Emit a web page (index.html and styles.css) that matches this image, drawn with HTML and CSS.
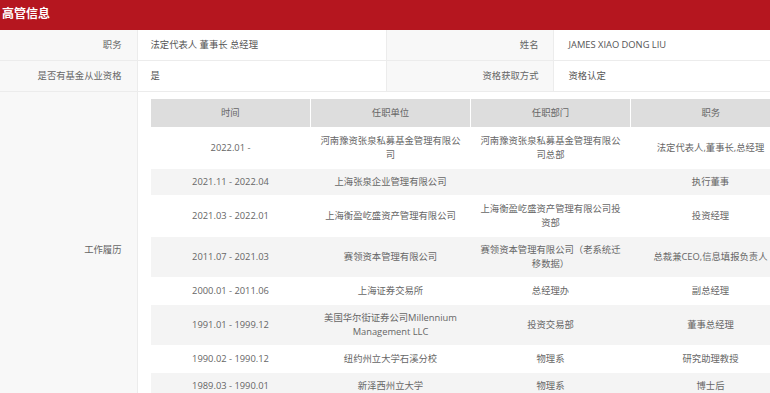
FILE: index.html
```html
<!DOCTYPE html>
<html lang="zh-CN">
<head>
<meta charset="utf-8">
<title>高管信息</title>
<link rel="stylesheet" href="styles.css">
</head>
<body>
<div class="panel">
  <div class="panel-title">高管信息</div>
  <table class="info">
    <colgroup>
      <col class="c-label1"><col class="c-value1"><col class="c-label2"><col class="c-value2">
    </colgroup>
    <tr>
      <th class="label">职务</th>
      <td class="value">法定代表人 董事长 总经理</td>
      <th class="label label2">姓名</th>
      <td class="value value2">JAMES XIAO DONG LIU</td>
    </tr>
    <tr>
      <th class="label">是否有基金从业资格</th>
      <td class="value">是</td>
      <th class="label label2">资格获取方式</th>
      <td class="value value2">资格认定</td>
    </tr>
    <tr>
      <th class="label">工作履历</th>
      <td class="value history-cell" colspan="3">
        <table class="history">
          <thead>
            <tr><th>时间</th><th>任职单位</th><th>任职部门</th><th>职务</th></tr>
          </thead>
          <tbody>
            <tr><td>2022.01 -</td><td>河南豫资张泉私募基金管理有限公司</td><td>河南豫资张泉私募基金管理有限公司总部</td><td>法定代表人,董事长,总经理</td></tr>
            <tr><td>2021.11 - 2022.04</td><td>上海张泉企业管理有限公司</td><td></td><td>执行董事</td></tr>
            <tr><td>2021.03 - 2022.01</td><td>上海衡盈屹盛资产管理有限公司</td><td>上海衡盈屹盛资产管理有限公司投资部</td><td>投资经理</td></tr>
            <tr><td>2011.07 - 2021.03</td><td>赛领资本管理有限公司</td><td>赛领资本管理有限公司（老系统迁移数据）</td><td>总裁兼CEO,信息填报负责人</td></tr>
            <tr><td>2000.01 - 2011.06</td><td>上海证券交易所</td><td>总经理办</td><td>副总经理</td></tr>
            <tr><td>1991.01 - 1999.12</td><td>美国华尔街证券公司Millennium Management LLC</td><td>投资交易部</td><td>董事总经理</td></tr>
            <tr><td>1990.02 - 1990.12</td><td>纽约州立大学石溪分校</td><td>物理系</td><td>研究助理教授</td></tr>
            <tr><td>1989.03 - 1990.01</td><td>新泽西州立大学</td><td>物理系</td><td>博士后</td></tr>
          </tbody>
        </table>
      </td>
    </tr>
  </table>
</div>
</body>
</html>
```
FILE: styles.css
```css
html, body {
  margin: 0;
  padding: 0;
  overflow: hidden;
  background: #ffffff;
}
body {
  font-family: "Open Sans", "Noto Sans CJK SC", sans-serif;
  font-size: 9.33px;
  color: #666666;
}
.panel {
  width: 800px;
}
.panel-title {
  height: 30px;
  line-height: 25px;
  padding-left: 2px;
  background: #b5161f;
  color: #ffffff;
  font-family: "Noto Sans CJK SC", sans-serif;
  font-size: 12px;
  font-weight: bold;
}
.info {
  width: 800px;
  table-layout: fixed;
  border-collapse: collapse;
}
.c-label1 { width: 137px; }
.c-value1 { width: 249px; }
.c-label2 { width: 167px; }
.label,
.value {
  border: 1px solid #ececec;
  border-top: none;
  height: 30px;
  padding: 0;
  line-height: 14px;
  vertical-align: middle;
  font-weight: normal;
}
.label {
  border-left: none;
  background: #f8f8f8;
  text-align: right;
  padding-right: 15px;
  color: #666666;
}
.label2 { padding-right: 14px; border-left: 1px solid #ececec; }
.value {
  text-align: left;
  padding-left: 13px;
  color: #555555;
  background: #ffffff;
}
.value2 { padding-left: 15px; }
.history-cell {
  padding-top: 7px;
  padding-bottom: 7px;
  vertical-align: top;
}
.history {
  width: 640px;
  table-layout: fixed;
  border-collapse: collapse;
}
.history th,
.history td {
  padding: 6px 8px;
  height: auto;
  line-height: 14px;
  text-align: center;
  vertical-align: middle;
  border-bottom: 1px solid #ffffff;
  color: #666666;
  font-weight: normal;
}
.history th {
  padding: 7px 8px;
  background: #dddddd;
  border-left: 1px solid #ffffff;
}
.history th:first-child { border-left: none; }
.history tbody tr:nth-child(even) td { background: #f4f4f4; }
```
